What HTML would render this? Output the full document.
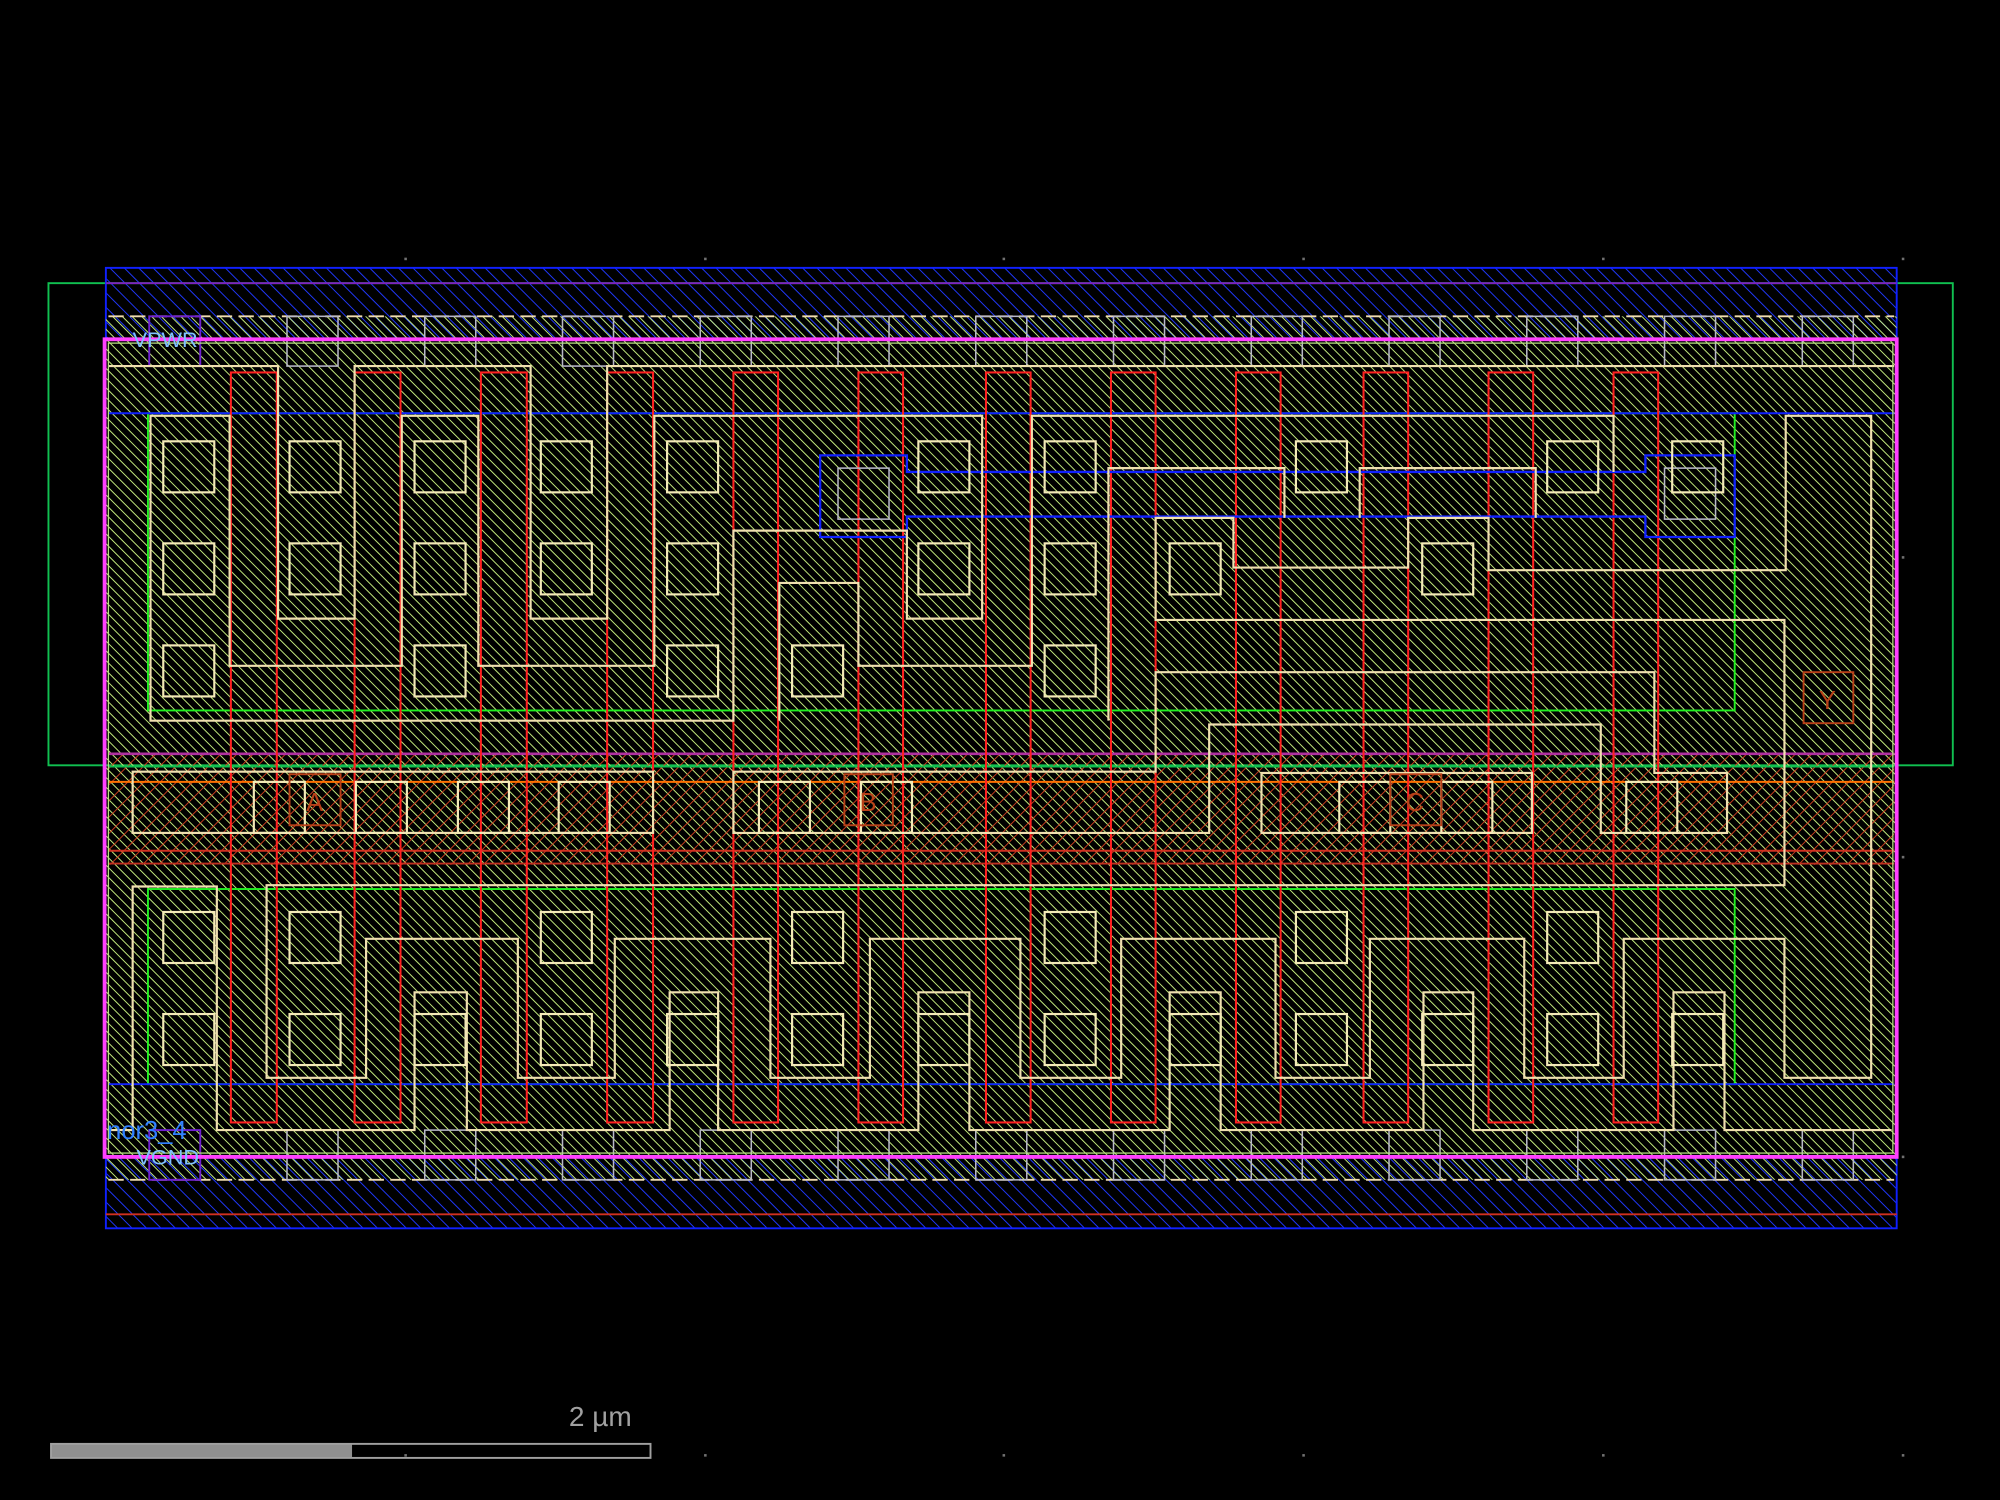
<!DOCTYPE html>
<html><head><meta charset="utf-8"><style>
html,body{margin:0;padding:0;background:#000;overflow:hidden}
svg{display:block}
</style></head><body>
<svg xmlns="http://www.w3.org/2000/svg" width="2000" height="1500" viewBox="0 0 1568 1176" preserveAspectRatio="none">
<defs>
<pattern id="hy" width="5.4" height="5.4" patternUnits="userSpaceOnUse" patternTransform="rotate(-45)">
<line x1="0" y1="0" x2="0" y2="5.4" stroke="#c8f080" stroke-width="1.5"/></pattern>
<pattern id="hb" width="8" height="8" patternUnits="userSpaceOnUse" patternTransform="rotate(-45)">
<line x1="0" y1="0" x2="0" y2="8" stroke="#2038ff" stroke-width="1.5"/></pattern>
<pattern id="hr" width="9" height="9" patternUnits="userSpaceOnUse" patternTransform="rotate(45)">
<line x1="0" y1="0" x2="0" y2="9" stroke="#d84020" stroke-width="1.4"/></pattern>
</defs>
<rect width="1568" height="1176" fill="#000"/>
<g fill="#707070">
<rect x="317" y="202" width="2" height="2"/><rect x="552" y="202" width="2" height="2"/><rect x="786" y="202" width="2" height="2"/><rect x="1021" y="202" width="2" height="2"/><rect x="1256" y="202" width="2" height="2"/><rect x="1491" y="202" width="2" height="2"/>
<rect x="317" y="1140" width="2" height="2"/><rect x="552" y="1140" width="2" height="2"/><rect x="786" y="1140" width="2" height="2"/><rect x="1021" y="1140" width="2" height="2"/><rect x="1256" y="1140" width="2" height="2"/><rect x="1491" y="1140" width="2" height="2"/>
<rect x="1491" y="436" width="2" height="2"/><rect x="1491" y="671" width="2" height="2"/><rect x="1491" y="906" width="2" height="2"/>
</g>
<rect x="38" y="222" width="1493" height="378" fill="none" stroke="#10c050" stroke-width="1.5"/>
<rect x="83" y="210" width="1404" height="56" fill="url(#hb)" stroke="#1020ff" stroke-width="1.5"/>
<rect x="83" y="907" width="1404" height="56" fill="url(#hb)" stroke="#1020ff" stroke-width="1.5"/>
<line x1="83" y1="222" x2="1487" y2="222" stroke="#8020c0" stroke-width="1.5"/>
<line x1="83" y1="952" x2="1487" y2="952" stroke="#d03020" stroke-width="1.5"/>
<rect x="83" y="248" width="1404" height="677" fill="url(#hy)"/>
<rect x="85" y="590" width="1400" height="88" fill="url(#hr)"/>
<line x1="85" y1="591" x2="1485" y2="591" stroke="#b030a0" stroke-width="2"/>
<line x1="85" y1="601" x2="1485" y2="601" stroke="#10c050" stroke-width="1.5"/>
<line x1="85" y1="613" x2="1485" y2="613" stroke="#ff7000" stroke-width="1.5"/>
<line x1="85" y1="667" x2="1485" y2="667" stroke="#d03020" stroke-width="1.5"/>
<line x1="85" y1="677" x2="1485" y2="677" stroke="#c03020" stroke-width="1.5"/>
<rect x="116" y="324" width="1244" height="233" fill="none" stroke="#20f020" stroke-width="1.5"/>
<rect x="116" y="697" width="1244" height="153" fill="none" stroke="#20f020" stroke-width="1.5"/>
<line x1="85" y1="324" x2="1485" y2="324" stroke="#1020ff" stroke-width="1.5"/>
<line x1="85" y1="850" x2="1485" y2="850" stroke="#1020ff" stroke-width="1.5"/>
<g fill="none" stroke="#ff2020" stroke-width="1.6">
<rect x="181" y="292" width="36" height="588"/><rect x="278" y="292" width="36" height="588"/><rect x="377" y="292" width="36" height="588"/><rect x="476" y="292" width="36" height="588"/><rect x="575" y="292" width="35" height="588"/><rect x="673" y="292" width="35" height="588"/><rect x="773" y="292" width="35" height="588"/><rect x="871" y="292" width="35" height="588"/><rect x="969" y="292" width="35" height="588"/><rect x="1069" y="292" width="35" height="588"/><rect x="1167" y="292" width="35" height="588"/><rect x="1265" y="292" width="35" height="588"/>
</g>
<line x1="85" y1="248" x2="1485" y2="248" stroke="#f0dcb0" stroke-width="1.5" stroke-dasharray="12 5"/>
<line x1="85" y1="925" x2="1485" y2="925" stroke="#f0dcb0" stroke-width="1.5" stroke-dasharray="12 5"/>
<g fill="none" stroke="#b8b8c8" stroke-width="1.2">
<rect x="225" y="248" width="40" height="39"/><rect x="333" y="248" width="40" height="39"/><rect x="441" y="248" width="40" height="39"/><rect x="549" y="248" width="40" height="39"/><rect x="657" y="248" width="40" height="39"/><rect x="765" y="248" width="40" height="39"/><rect x="873" y="248" width="40" height="39"/><rect x="981" y="248" width="40" height="39"/><rect x="1089" y="248" width="40" height="39"/><rect x="1197" y="248" width="40" height="39"/><rect x="1305" y="248" width="40" height="39"/><rect x="1413" y="248" width="40" height="39"/>
<rect x="225" y="886" width="40" height="39"/><rect x="333" y="886" width="40" height="39"/><rect x="441" y="886" width="40" height="39"/><rect x="549" y="886" width="40" height="39"/><rect x="657" y="886" width="40" height="39"/><rect x="765" y="886" width="40" height="39"/><rect x="873" y="886" width="40" height="39"/><rect x="981" y="886" width="40" height="39"/><rect x="1089" y="886" width="40" height="39"/><rect x="1197" y="886" width="40" height="39"/><rect x="1305" y="886" width="40" height="39"/><rect x="1413" y="886" width="40" height="39"/>
<rect x="657" y="367" width="40" height="40"/><rect x="1305" y="367" width="40" height="40"/>
</g>
<rect x="117" y="248" width="40" height="39" fill="none" stroke="#7020d0" stroke-width="1.5"/>
<rect x="117" y="886" width="40" height="39" fill="none" stroke="#7020d0" stroke-width="1.5"/>
<path d="M643,357 H711 V370 H1290 V357 H1360 V421 H1290 V405 H711 V421 H643 Z" fill="none" stroke="#1020ff" stroke-width="1.8"/>
<g fill="none" stroke="#f0e0b0" stroke-width="1.7">
<path d="M85,287 H218 V485 H278 V287 H416 V485 H476 V287 H1485"/>
<path d="M118,326 V565 H575 V416 H711 V485 H770 V326 H513 V522 H375 V326 H315 V522 H180 V326 Z"/>
<path d="M611,565 V457 H673 V522 H809 V326 H1265 V370"/>
<path d="M869,565 V367 H1007 V406"/>
<path d="M1066,406 V367 H1204 V406"/>
<path d="M906,486 V406 H967 V445 H1104 V406 H1167 V447 H1400 V326 H1467 V845 H1399 V736 H1273 V845 H1195 V736 H1074 V845 H1000 V736 H879 V845 H800 V736 H682 V845 H604 V736 H482 V845 H406 V736 H287 V845 H209 V694 H1399 V486 Z"/>
<path d="M906,527 H1297 V606 H1354 V653 H1255 V568 H948 V653 H575 V605 H906 Z"/>
<rect x="104" y="605" width="408" height="48"/>
<rect x="989" y="606" width="212" height="47"/>
<path d="M104,886 V695 H170 V886 H325 V778 H366 V886 H525 V778 H563 V886 H720 V778 H760 V886 H917 V778 H957 V886 H1116 V778 H1155 V886 H1312 V778 H1352 V886 H1483"/>
<path d="M104,886 H85"/>
</g>
<g fill="none" stroke="#f4eab8" stroke-width="1.7">
<rect x="128" y="346" width="40" height="40"/><rect x="128" y="426" width="40" height="40"/><rect x="128" y="506" width="40" height="40"/>
<rect x="227" y="346" width="40" height="40"/><rect x="227" y="426" width="40" height="40"/>
<rect x="325" y="346" width="40" height="40"/><rect x="325" y="426" width="40" height="40"/><rect x="325" y="506" width="40" height="40"/>
<rect x="424" y="346" width="40" height="40"/><rect x="424" y="426" width="40" height="40"/>
<rect x="523" y="346" width="40" height="40"/><rect x="523" y="426" width="40" height="40"/><rect x="523" y="506" width="40" height="40"/>
<rect x="621" y="506" width="40" height="40"/>
<rect x="720" y="346" width="40" height="40"/><rect x="720" y="426" width="40" height="40"/>
<rect x="819" y="346" width="40" height="40"/><rect x="819" y="426" width="40" height="40"/><rect x="819" y="506" width="40" height="40"/>
<rect x="917" y="426" width="40" height="40"/>
<rect x="1016" y="346" width="40" height="40"/>
<rect x="1115" y="426" width="40" height="40"/>
<rect x="1213" y="346" width="40" height="40"/>
<rect x="1311" y="346" width="40" height="40"/>
<rect x="128" y="715" width="40" height="40"/><rect x="128" y="795" width="40" height="40"/>
<rect x="227" y="715" width="40" height="40"/><rect x="227" y="795" width="40" height="40"/>
<rect x="325" y="795" width="40" height="40"/>
<rect x="424" y="715" width="40" height="40"/><rect x="424" y="795" width="40" height="40"/>
<rect x="523" y="795" width="40" height="40"/>
<rect x="621" y="715" width="40" height="40"/><rect x="621" y="795" width="40" height="40"/>
<rect x="720" y="795" width="40" height="40"/>
<rect x="819" y="715" width="40" height="40"/><rect x="819" y="795" width="40" height="40"/>
<rect x="917" y="795" width="40" height="40"/>
<rect x="1016" y="715" width="40" height="40"/><rect x="1016" y="795" width="40" height="40"/>
<rect x="1115" y="795" width="40" height="40"/>
<rect x="1213" y="715" width="40" height="40"/><rect x="1213" y="795" width="40" height="40"/>
<rect x="1311" y="795" width="40" height="40"/>
<rect x="199" y="613" width="40" height="40"/><rect x="279" y="613" width="40" height="40"/><rect x="359" y="613" width="40" height="40"/><rect x="438" y="613" width="40" height="40"/>
<rect x="595" y="613" width="40" height="40"/><rect x="675" y="613" width="40" height="40"/>
<rect x="1050" y="613" width="40" height="40"/><rect x="1130" y="613" width="40" height="40"/>
<rect x="1275" y="613" width="40" height="40"/>
</g>
<g fill="none" stroke="#b84018" stroke-width="1.5">
<rect x="227" y="607" width="40" height="40"/><rect x="662" y="607" width="38" height="40"/><rect x="1090" y="607" width="40" height="40"/><rect x="1414" y="527" width="39" height="40"/>
</g>
<g font-family="Liberation Sans, sans-serif" font-size="20" fill="#b84018">
<text x="240" y="636">A</text><text x="674" y="636">B</text><text x="1102" y="636">C</text><text x="1426" y="556">Y</text>
</g>
<rect x="82" y="266" width="1405" height="641" fill="none" stroke="#ff40ff" stroke-width="3"/>
<rect x="85" y="269" width="1399" height="635" fill="none" stroke="#b8e080" stroke-width="1"/>
<g font-family="Liberation Sans, sans-serif">
<text x="104" y="272" font-size="17" fill="#80c0ff">VPWR</text>
<text x="84" y="893" font-size="20" fill="#3080ff">nor3_4</text>
<text x="107" y="913" font-size="17" fill="#80c0ff">VGND</text>
<text x="446" y="1118" font-size="22" fill="#a0a0a0">2 µm</text>
</g>
<rect x="40" y="1132" width="236" height="11" fill="#909090"/>
<rect x="40" y="1132" width="470" height="11" fill="none" stroke="#a0a0a0" stroke-width="1.5"/>
</svg>
</body></html>
